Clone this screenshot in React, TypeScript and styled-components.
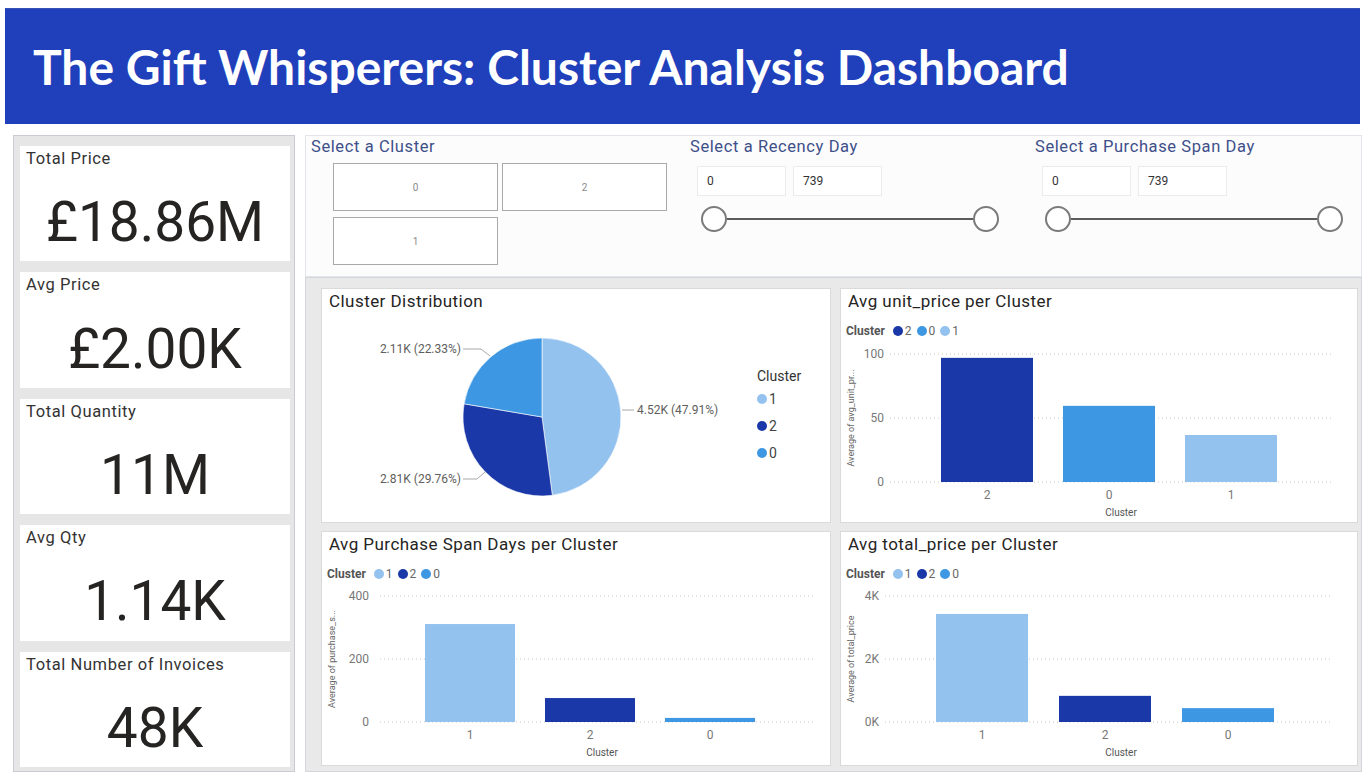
import React from "react";
import styled, { createGlobalStyle } from "styled-components";

const DARK = "#1a38a7";
const MID = "#3e97e2";
const LIGHT = "#93c2ef";

const Global = createGlobalStyle`
  html, body { margin: 0; padding: 0; background: #ffffff; }
  body {
    width: 1372px;
    height: 784px;
    overflow: hidden;
    font-family: Roboto, "Liberation Sans", sans-serif;
  }
  * { box-sizing: border-box; }
`;

const Page = styled.div`
  width: 1372px;
  height: 784px;
  padding: 8px 10px 0 5px;
  display: flex;
  flex-direction: column;
`;

const Header = styled.header`
  height: 116px;
  margin-right: 2px;
  background: #1f3fbb;
  border-top: 1px solid #3650b8;
  display: flex;
  align-items: center;
  padding-left: 28px;
`;

const HeaderTitle = styled.h1`
  margin: 0;
  font-family: Lato, "Open Sans", sans-serif;
  font-weight: 700;
  font-size: 48px;
  color: #ffffff;
`;

const Main = styled.main`
  margin-top: 11px;
  height: 637px;
  display: flex;
  gap: 10px;
`;

const KpiColumn = styled.aside`
  width: 282px;
  margin-left: 8px;
  background: #e6e6e6;
  border: 1px solid #c9cdd3;
  padding: 10px 4px 4px 6px;
  display: flex;
  flex-direction: column;
  gap: 11px;
`;

const KpiCard = styled.div`
  flex: 1;
  background: #ffffff;
  display: flex;
  flex-direction: column;
`;

const KpiLabel = styled.div`
  padding: 4px 0 0 6px;
  font-size: 16.5px;
  line-height: 18px;
  letter-spacing: 0.6px;
  color: #333333;
`;

const KpiValue = styled.div`
  flex: 1;
  display: flex;
  align-items: center;
  justify-content: center;
  padding-top: 15px;
  font-size: 55px;
  color: #252423;
`;

const RightColumn = styled.section`
  flex: 1;
  display: flex;
  flex-direction: column;
`;

const SlicerPanel = styled.div`
  height: 143px;
  background: #fcfcfc;
  border: 1px solid #e2e5e9;
  padding: 2px 0 0 5px;
  display: grid;
  grid-template-columns: 379px 345px 1fr;
`;

const SlicerGroup = styled.div`
  display: flex;
  flex-direction: column;
`;

const SlicerTitle = styled.div`
  font-size: 16.5px;
  line-height: 18px;
  letter-spacing: 0.6px;
  color: #3e4f8a;
`;

const ClusterGrid = styled.div`
  margin: 7px 0 0 22px;
  display: grid;
  grid-template-columns: 165px 165px;
  grid-auto-rows: 48px;
  gap: 6px 4px;
`;

const ClusterButton = styled.div`
  border: 1px solid #a9a9a9;
  background: #ffffff;
  display: flex;
  align-items: center;
  justify-content: center;
  font-size: 10px;
  color: #8a8a8a;
`;

const RangeInputs = styled.div`
  margin: 10px 0 0 7px;
  display: flex;
  gap: 7px;
`;

const RangeBox = styled.div`
  width: 89px;
  height: 30px;
  border: 1px solid #ececec;
  background: #ffffff;
  display: flex;
  align-items: center;
  padding-left: 9px;
  font-size: 12px;
  color: #333333;
`;

const Slider = styled.div<{ $offset: number }>`
  margin: 10px 0 0 ${(p) => p.$offset}px;
  width: 298px;
  display: flex;
  align-items: center;
`;

const Knob = styled.div`
  width: 26px;
  height: 26px;
  flex-shrink: 0;
  border: 2px solid #7b7b7b;
  border-radius: 50%;
  background: #ffffff;
`;

const Track = styled.div`
  flex: 1;
  height: 2px;
  background: #5c5c5c;
`;

const ChartsPanel = styled.div`
  flex: 1;
  background: #e9e9e9;
  border: 1px solid #d3d7dc;
  padding: 10px 3px 5px 15px;
  display: grid;
  grid-template-columns: 510px 1fr;
  grid-template-rows: 1fr 1fr;
  gap: 8px 9px;
`;

const ChartCard = styled.div`
  background: #ffffff;
  border: 1px solid #dadada;
  display: flex;
  flex-direction: column;
  min-height: 0;
`;

const ChartTitle = styled.div`
  padding: 2px 0 0 7px;
  font-size: 17px;
  line-height: 20px;
  letter-spacing: 0.45px;
  color: #252423;
`;

const ChartLegend = styled.div`
  margin: 13px 0 0 5px;
  display: flex;
  align-items: center;
  gap: 5px;
  height: 14px;
  font-size: 12px;
  color: #666666;
`;

const LegendName = styled.span`
  font-weight: 700;
  color: #555555;
  margin-right: 3px;
`;

const LegendItem = styled.span`
  display: flex;
  align-items: center;
  gap: 2px;
`;

const Dot = styled.span<{ $color: string; $size?: number }>`
  width: ${(p) => p.$size ?? 10}px;
  height: ${(p) => p.$size ?? 10}px;
  border-radius: 50%;
  background: ${(p) => p.$color};
  display: inline-block;
`;

const ChartSvg = styled.svg`
  display: block;
  width: 100%;
  flex: 1;
  min-height: 0;
  overflow: visible;
  font-family: Roboto, "Liberation Sans", sans-serif;
`;

const PieBody = styled.div`
  flex: 1;
  display: flex;
  min-height: 0;
`;

const PieSvg = styled.svg`
  display: block;
  width: 430px;
  height: 211px;
  flex-shrink: 0;
  font-family: Roboto, "Liberation Sans", sans-serif;
`;

const PieLegend = styled.div`
  margin: 56px 0 0 5px;
  display: flex;
  flex-direction: column;
`;

const PieLegendTitle = styled.div`
  font-size: 14px;
  line-height: 18px;
  color: #333333;
`;

const PieLegendItem = styled.div`
  height: 27px;
  display: flex;
  align-items: center;
  gap: 2px;
  font-size: 14px;
  color: #444444;
`;

const kpis = [
  { label: "Total Price", value: "£18.86M" },
  { label: "Avg Price", value: "£2.00K" },
  { label: "Total Quantity", value: "11M" },
  { label: "Avg Qty", value: "1.14K" },
  { label: "Total Number of Invoices", value: "48K" },
];

function RangeSlicer({ title, knobOffset }: { title: string; knobOffset: number }) {
  return (
    <SlicerGroup>
      <SlicerTitle>{title}</SlicerTitle>
      <RangeInputs>
        <RangeBox>0</RangeBox>
        <RangeBox>739</RangeBox>
      </RangeInputs>
      <Slider $offset={knobOffset}>
        <Knob />
        <Track />
        <Knob />
      </Slider>
    </SlicerGroup>
  );
}

const CX = 220;
const CY = 106;
const R = 79;

function polar(deg: number): [number, number] {
  const a = (deg * Math.PI) / 180;
  return [CX + R * Math.sin(a), CY - R * Math.cos(a)];
}

function slicePath(from: number, to: number) {
  const [x1, y1] = polar(from);
  const [x2, y2] = polar(to);
  const large = to - from > 180 ? 1 : 0;
  return `M ${CX} ${CY} L ${x1.toFixed(2)} ${y1.toFixed(2)} A ${R} ${R} 0 ${large} 1 ${x2.toFixed(2)} ${y2.toFixed(2)} Z`;
}

function PieCard() {
  const a1 = 0.4791 * 360;
  const a2 = a1 + 0.2976 * 360;
  return (
    <ChartCard>
      <ChartTitle>Cluster Distribution</ChartTitle>
      <PieBody>
        <PieSvg>
          <path d={slicePath(0, a1)} fill={LIGHT} stroke="#ffffff" strokeWidth={0.6} />
          <path d={slicePath(a1, a2)} fill={DARK} stroke="#ffffff" strokeWidth={0.6} />
          <path d={slicePath(a2, 360)} fill={MID} stroke="#ffffff" strokeWidth={0.6} />
          <g stroke="#a8a8a8" strokeWidth={1} fill="none">
            <polyline points="141,38 159,38 168,45" />
            <polyline points="300,99 312,99" />
            <polyline points="141,168 155,168 163,161" />
          </g>
          <g fontSize={12} fill="#605e5c">
            <text x={139} y={42} textAnchor="end">2.11K (22.33%)</text>
            <text x={315} y={103}>4.52K (47.91%)</text>
            <text x={139} y={172} textAnchor="end">2.81K (29.76%)</text>
          </g>
        </PieSvg>
        <PieLegend>
          <PieLegendTitle>Cluster</PieLegendTitle>
          <PieLegendItem><Dot $color={LIGHT} $size={10} />1</PieLegendItem>
          <PieLegendItem><Dot $color={DARK} $size={10} />2</PieLegendItem>
          <PieLegendItem><Dot $color={MID} $size={10} />0</PieLegendItem>
        </PieLegend>
      </PieBody>
    </ChartCard>
  );
}

type Bar = { label: string; value: number; color: string; x: number };

interface BarChartProps {
  title: string;
  legend: { label: string; color: string }[];
  axisTitle: string;
  ticks: [string, string, string];
  max: number;
  bars: Bar[];
  barWidth: number;
  labelRight: number;
  gridStart: number;
  gridEnd: number;
  gridTop: number;
  zero: number;
}

function BarChart(p: BarChartProps) {
  const mid = (p.gridTop + p.zero) / 2;
  const scale = (p.zero - p.gridTop) / p.max;
  const gridYs = [p.gridTop, mid, p.zero];
  return (
    <ChartCard>
      <ChartTitle>{p.title}</ChartTitle>
      <ChartLegend>
        <LegendName>Cluster</LegendName>
        {p.legend.map((l) => (
          <LegendItem key={l.label}>
            <Dot $color={l.color} />
            {l.label}
          </LegendItem>
        ))}
      </ChartLegend>
      <ChartSvg>
        {gridYs.map((y, i) => (
          <line
            key={i}
            x1={p.gridStart}
            x2={p.gridEnd}
            y1={y}
            y2={y}
            stroke="#c8c8c8"
            strokeWidth={1}
            strokeDasharray="1 3"
          />
        ))}
        {gridYs.map((y, i) => (
          <text key={i} x={p.labelRight} y={y + 4} fontSize={12} fill="#777777" textAnchor="end">
            {p.ticks[i]}
          </text>
        ))}
        <text
          transform={`translate(13 ${mid}) rotate(-90)`}
          fontSize={9}
          fill="#666666"
          textAnchor="middle"
        >
          {p.axisTitle}
        </text>
        {p.bars.map((b) => {
          const h = b.value * scale;
          return (
            <g key={b.label}>
              <rect x={b.x} y={p.zero - h} width={p.barWidth} height={h} fill={b.color} />
              <text x={b.x + p.barWidth / 2} y={p.zero + 17} fontSize={12} fill="#777777" textAnchor="middle">
                {b.label}
              </text>
            </g>
          );
        })}
        <text x={280} y={p.zero + 34} fontSize={10} fill="#555555" textAnchor="middle">
          Cluster
        </text>
      </ChartSvg>
    </ChartCard>
  );
}

export default function App() {
  return (
    <>
      <Global />
      <Page>
        <Header>
          <HeaderTitle>The Gift Whisperers: Cluster Analysis Dashboard</HeaderTitle>
        </Header>
        <Main>
          <KpiColumn>
            {kpis.map((k) => (
              <KpiCard key={k.label}>
                <KpiLabel>{k.label}</KpiLabel>
                <KpiValue>{k.value}</KpiValue>
              </KpiCard>
            ))}
          </KpiColumn>
          <RightColumn>
            <SlicerPanel>
              <SlicerGroup>
                <SlicerTitle>Select a Cluster</SlicerTitle>
                <ClusterGrid>
                  <ClusterButton>0</ClusterButton>
                  <ClusterButton>2</ClusterButton>
                  <ClusterButton>1</ClusterButton>
                </ClusterGrid>
              </SlicerGroup>
              <RangeSlicer title="Select a Recency Day" knobOffset={11} />
              <RangeSlicer title="Select a Purchase Span Day" knobOffset={10} />
            </SlicerPanel>
            <ChartsPanel>
              <PieCard />
              <BarChart
                title="Avg unit_price per Cluster"
                legend={[
                  { label: "2", color: DARK },
                  { label: "0", color: MID },
                  { label: "1", color: LIGHT },
                ]}
                axisTitle="Average of avg_unit_pr..."
                ticks={["100", "50", "0"]}
                max={100}
                bars={[
                  { label: "2", value: 97, color: DARK, x: 100 },
                  { label: "0", value: 59.5, color: MID, x: 222 },
                  { label: "1", value: 36.7, color: LIGHT, x: 344 },
                ]}
                barWidth={92}
                labelRight={43}
                gridStart={49}
                gridEnd={490}
                gridTop={16}
                zero={144}
              />
              <BarChart
                title="Avg Purchase Span Days per Cluster"
                legend={[
                  { label: "1", color: LIGHT },
                  { label: "2", color: DARK },
                  { label: "0", color: MID },
                ]}
                axisTitle="Average of purchase_s..."
                ticks={["400", "200", "0"]}
                max={400}
                bars={[
                  { label: "1", value: 311, color: LIGHT, x: 103 },
                  { label: "2", value: 76, color: DARK, x: 223 },
                  { label: "0", value: 13, color: MID, x: 343 },
                ]}
                barWidth={90}
                labelRight={47}
                gridStart={58}
                gridEnd={494}
                gridTop={15}
                zero={141}
              />
              <BarChart
                title="Avg total_price per Cluster"
                legend={[
                  { label: "1", color: LIGHT },
                  { label: "2", color: DARK },
                  { label: "0", color: MID },
                ]}
                axisTitle="Average of total_price"
                ticks={["4K", "2K", "0K"]}
                max={4}
                bars={[
                  { label: "1", value: 3.43, color: LIGHT, x: 95 },
                  { label: "2", value: 0.83, color: DARK, x: 218 },
                  { label: "0", value: 0.44, color: MID, x: 341 },
                ]}
                barWidth={92}
                labelRight={38}
                gridStart={44}
                gridEnd={490}
                gridTop={15}
                zero={141}
              />
            </ChartsPanel>
          </RightColumn>
        </Main>
      </Page>
    </>
  );
}
